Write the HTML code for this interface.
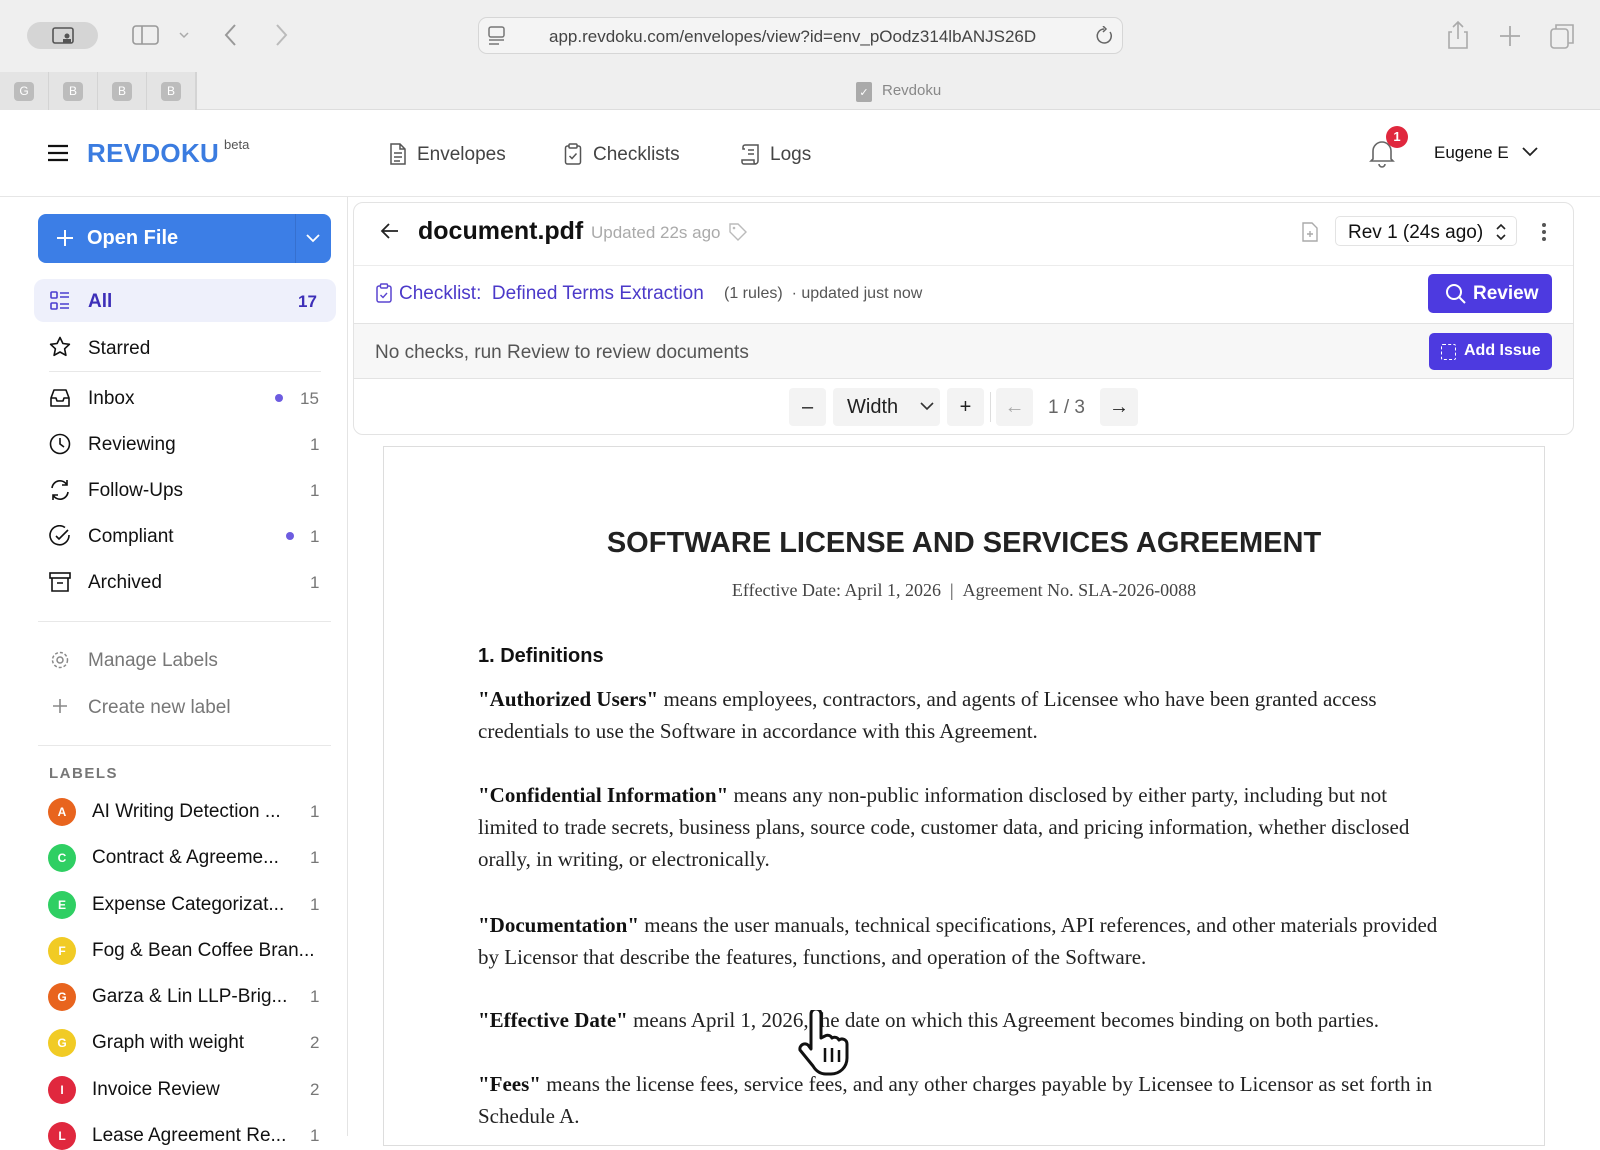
<!DOCTYPE html>
<html><head><meta charset="utf-8"><style>
*{box-sizing:border-box;margin:0;padding:0}
body{width:1600px;height:1136px;overflow:hidden;background:#fff;font-family:"Liberation Sans",sans-serif;position:relative;color:#111}
.abs{position:absolute}
svg{display:block}
.chrome{left:0;top:0;width:1600px;height:110px;background:#efefef;border-bottom:1px solid #ddd}
.url{left:478px;top:17px;width:645px;height:37px;border:1px solid #d6d6d6;border-radius:9px;background:#f4f4f4;font-size:17px;color:#444;padding:9px 0 0 70px}
.tab{top:72px;width:49px;height:38px;border-right:1px solid #d4d4d4;background:#e4e4e4}
.tab span{position:absolute;left:14px;top:10px;width:20px;height:19px;background:#bcbcbc;border-radius:4px;color:#fff;font-size:12px;text-align:center;line-height:19px}
.hdr{left:0;top:110px;width:1600px;height:87px;border-bottom:1px solid #e6e6e6;background:#fff}
.nav{font-size:19px;color:#444;top:144px}
.side{left:0;top:197px;width:348px;height:939px;border-right:1px solid #e4e4e4}
.item{left:50px;font-size:19px;color:#111;height:24px;width:270px;white-space:nowrap}
.item .t{position:absolute;left:38px;top:2px}
.cnt{font-size:17px;color:#777}
.dot{width:8px;height:8px;border-radius:50%;background:#6d5ce0}
.lab{left:48px;font-size:19px;color:#111}
.lab .b{position:absolute;left:0;top:-3px;width:28px;height:28px;border-radius:50%;color:#fff;font-size:12px;font-weight:bold;text-align:center;line-height:28px}
.lab .t{position:absolute;left:44px;top:0;white-space:nowrap}
.lab .c{position:absolute;left:262px;top:1px;color:#777;font-size:17px}
.hr{height:2px;background:#e8e8e8}
.card{left:353px;top:202px;width:1221px;height:233px;border:1px solid #e3e3e3;border-radius:10px;overflow:hidden;background:#fff}
.doc{left:383px;top:446px;width:1162px;height:700px;border:1px solid #ddd;background:#fff}
.p{font-family:"Liberation Serif",serif;font-size:21px;color:#222;left:478px;line-height:32px;white-space:nowrap}
.p b{color:#111}
.btn{background:#4d3ae0;color:#fff;border-radius:5px;font-size:19px;font-weight:bold}
.tb{background:#f3f3f3;border-radius:4px;height:38px;top:388px;font-size:20px;color:#222;text-align:center;line-height:38px}
</style></head><body>
<div class="abs chrome"></div>
<div class="abs" style="left:27px;top:22px;width:71px;height:27px;border-radius:14px;background:#d5d5d5"></div>
<svg class="abs" style="left:52px;top:27px" width="24" height="18"><rect x="1" y="1" width="20" height="15" rx="2" fill="none" stroke="#555" stroke-width="1.6"/><circle cx="15" cy="9" r="2.5" fill="#555"/><rect x="11" y="12" width="8" height="4" fill="#555"/></svg>
<svg class="abs" style="left:132px;top:24px" width="64" height="22"><rect x="1" y="2" width="25" height="18" rx="3" fill="none" stroke="#999" stroke-width="1.6"/><line x1="10" y1="2" x2="10" y2="20" stroke="#999" stroke-width="1.6"/><path d="M48 9l4 4 4-4" fill="none" stroke="#aaa" stroke-width="1.5"/></svg>
<svg class="abs" style="left:222px;top:23px" width="70" height="24"><path d="M13 2L4 12l9 10" fill="none" stroke="#999" stroke-width="2"/><path d="M55 2l9 10-9 10" fill="none" stroke="#bbb" stroke-width="2"/></svg>
<div class="abs url">app.revdoku.com/envelopes/view?id=env_pOodz314lbANJS26D</div>
<svg class="abs" style="left:488px;top:26px" width="18" height="20"><rect x="1" y="1" width="15" height="10" rx="2" fill="none" stroke="#777" stroke-width="1.5"/><line x1="1" y1="14" x2="16" y2="14" stroke="#777" stroke-width="1.5"/><line x1="1" y1="18" x2="11" y2="18" stroke="#777" stroke-width="1.5"/></svg>
<svg class="abs" style="left:1095px;top:26px" width="20" height="20"><path d="M15 6A7 7 0 1 1 9 3" fill="none" stroke="#666" stroke-width="1.5"/><path d="M8 0l3 3-3 3" fill="none" stroke="#666" stroke-width="1.5"/></svg>
<svg class="abs" style="left:1446px;top:20px" width="140" height="30"><path d="M6 12H3v16h18V12h-3M12 2v17M7 7l5-5 5 5" fill="none" stroke="#aaa" stroke-width="1.6"/><path d="M64 6v20M54 16h20" stroke="#aaa" stroke-width="1.8"/><rect x="105" y="9" width="17" height="19" rx="3" fill="none" stroke="#aaa" stroke-width="1.6"/><path d="M110 9V5h17v18h-5" fill="none" stroke="#aaa" stroke-width="1.6"/></svg>
<div class="abs tab" style="left:0"><span>G</span></div>
<div class="abs tab" style="left:49px"><span>B</span></div>
<div class="abs tab" style="left:98px"><span>B</span></div>
<div class="abs tab" style="left:147px"><span>B</span></div>
<div class="abs" style="left:196px;top:72px;width:1px;height:38px;background:#d4d4d4"></div>
<div class="abs" style="left:856px;top:82px;width:16px;height:20px;background:#aaa;border-radius:2px;color:#fff;font-size:11px;text-align:center;line-height:22px">✓</div>
<div class="abs" style="left:882px;top:82px;font-size:15px;color:#888">Revdoku</div>

<div class="abs hdr"></div>
<svg class="abs" style="left:47px;top:144px" width="22" height="18"><path d="M1 2h20M1 9h20M1 16h20" stroke="#111" stroke-width="2.2"/></svg>
<div class="abs" style="left:87px;top:138px;font-size:26px;font-weight:bold;color:#3b7ce0;letter-spacing:.3px">REVDOKU</div>
<div class="abs" style="left:224px;top:137px;font-size:13px;color:#555">beta</div>
<svg class="abs" style="left:389px;top:143px" width="18" height="22"><path d="M2 1h9l5 5v15H2z M11 1v5h5 M5 10h8M5 14h8M5 18h6" fill="none" stroke="#555" stroke-width="1.5"/></svg>
<div class="abs nav" style="left:417px">Envelopes</div>
<svg class="abs" style="left:564px;top:143px" width="18" height="22"><rect x="1.5" y="3" width="15" height="18" rx="2" fill="none" stroke="#555" stroke-width="1.5"/><rect x="5" y="1" width="8" height="4" rx="1" fill="#fff" stroke="#555" stroke-width="1.5"/><path d="M5.5 13l2.5 2.5 4.5-5" fill="none" stroke="#555" stroke-width="1.5"/></svg>
<div class="abs nav" style="left:593px">Checklists</div>
<svg class="abs" style="left:741px;top:143px" width="20" height="22"><path d="M4 2h13v16a3 3 0 0 1-3 3H3a2 2 0 0 1-2-2v-2h12v2a2 2 0 0 0 2 2 M4 2a2 2 0 0 0-2 2v2h2 M7 7h6M7 11h6" fill="none" stroke="#555" stroke-width="1.5"/></svg>
<div class="abs nav" style="left:770px">Logs</div>
<svg class="abs" style="left:1369px;top:138px" width="26" height="30"><path d="M4 21V13a9 9 0 0 1 18 0v8l2 2H2z M10 26a3 3 0 0 0 6 0" fill="none" stroke="#666" stroke-width="1.6"/></svg>
<div class="abs" style="left:1386px;top:126px;width:22px;height:22px;border-radius:50%;background:#e0283e;color:#fff;font-size:13px;font-weight:bold;text-align:center;line-height:22px">1</div>
<div class="abs" style="left:1434px;top:143px;font-size:17px;color:#111">Eugene E</div>
<svg class="abs" style="left:1521px;top:145px" width="18" height="14"><path d="M2 3l7 7 7-7" fill="none" stroke="#222" stroke-width="1.8"/></svg>

<div class="abs side"></div>
<div class="abs" style="left:38px;top:214px;width:293px;height:49px;background:#3c7ee6;border-radius:8px"></div>
<div class="abs" style="left:295px;top:214px;width:1px;height:49px;background:#3670cf"></div>
<svg class="abs" style="left:56px;top:229px" width="18" height="18"><path d="M9 1v16M1 9h16" stroke="#fff" stroke-width="2"/></svg>
<div class="abs" style="left:87px;top:227px;font-size:20px;color:#fff;font-weight:bold">Open File</div>
<svg class="abs" style="left:305px;top:232px" width="16" height="12"><path d="M2 3l6 6 6-6" fill="none" stroke="#fff" stroke-width="1.8"/></svg>
<div class="abs" style="left:34px;top:279px;width:302px;height:43px;background:#eef0fb;border-radius:10px"></div>
<svg class="abs" style="left:50px;top:291px" width="20" height="20"><rect x="1" y="1" width="6" height="6" rx="1" fill="none" stroke="#4a3fd0" stroke-width="1.6"/><rect x="1" y="12" width="6" height="6" rx="1" fill="none" stroke="#4a3fd0" stroke-width="1.6"/><path d="M10 2h9M10 6h9M10 13h9M10 17h9" stroke="#4a3fd0" stroke-width="1.6"/></svg>
<div class="abs" style="left:88px;top:291px;font-size:19px;font-weight:bold;color:#3d2fb8">All</div>
<div class="abs" style="left:298px;top:292px;font-size:17px;font-weight:bold;color:#3d2fb8">17</div>

<svg class="abs" style="left:49px;top:336px" width="22" height="22"><path d="M11 1.5l2.9 6 6.5.8-4.8 4.5 1.3 6.5L11 16l-5.9 3.3 1.3-6.5L1.6 8.3l6.5-.8z" fill="none" stroke="#111" stroke-width="1.6" stroke-linejoin="round"/></svg>
<div class="abs item" style="top:336px"><span class="t">Starred</span></div>
<div class="abs hr" style="left:49px;top:371px;width:272px;height:1px"></div>
<svg class="abs" style="left:49px;top:387px" width="22" height="22"><path d="M2 11l3-8h12l3 8v8H2z M2 11h5l1 3h6l1-3h5" fill="none" stroke="#111" stroke-width="1.6" stroke-linejoin="round"/></svg>
<div class="abs item" style="top:386px"><span class="t">Inbox</span></div>
<div class="abs dot" style="left:275px;top:394px"></div><div class="abs cnt" style="left:300px;top:389px">15</div>
<svg class="abs" style="left:49px;top:433px" width="22" height="22"><circle cx="11" cy="11" r="9.5" fill="none" stroke="#111" stroke-width="1.6"/><path d="M11 5v6l4 3" fill="none" stroke="#111" stroke-width="1.6"/></svg>
<div class="abs item" style="top:432px"><span class="t">Reviewing</span></div><div class="abs cnt" style="left:310px;top:435px">1</div>
<svg class="abs" style="left:49px;top:479px" width="22" height="22"><path d="M3 9a8 8 0 0 1 15-3M19 13a8 8 0 0 1-15 3 M18 1v5h-5 M4 21v-5h5" fill="none" stroke="#111" stroke-width="1.6"/></svg>
<div class="abs item" style="top:478px"><span class="t">Follow-Ups</span></div><div class="abs cnt" style="left:310px;top:481px">1</div>
<svg class="abs" style="left:49px;top:525px" width="22" height="22"><path d="M20 10a9.5 9.5 0 1 1-4-7.5 M7 11l3 3 9-9" fill="none" stroke="#111" stroke-width="1.6"/></svg>
<div class="abs item" style="top:524px"><span class="t">Compliant</span></div>
<div class="abs dot" style="left:286px;top:532px"></div><div class="abs cnt" style="left:310px;top:527px">1</div>
<svg class="abs" style="left:49px;top:571px" width="22" height="22"><rect x="1" y="2" width="20" height="5" fill="none" stroke="#111" stroke-width="1.6"/><path d="M3 7v13h16V7 M8 12h6" fill="none" stroke="#111" stroke-width="1.6"/></svg>
<div class="abs item" style="top:570px"><span class="t">Archived</span></div><div class="abs cnt" style="left:310px;top:573px">1</div>
<div class="abs hr" style="left:38px;top:621px;width:293px;height:1px"></div>
<svg class="abs" style="left:50px;top:650px" width="20" height="20"><circle cx="10" cy="10" r="3" fill="none" stroke="#888" stroke-width="1.5"/><circle cx="10" cy="10" r="7.5" fill="none" stroke="#888" stroke-width="1.5" stroke-dasharray="3 2"/></svg>
<div class="abs" style="left:88px;top:650px;font-size:19px;color:#777">Manage Labels</div>
<svg class="abs" style="left:52px;top:698px" width="16" height="16"><path d="M8 1v14M1 8h14" stroke="#888" stroke-width="1.6"/></svg>
<div class="abs" style="left:88px;top:697px;font-size:19px;color:#777">Create new label</div>
<div class="abs hr" style="left:38px;top:745px;width:293px;height:1px"></div>
<div class="abs" style="left:49px;top:765px;font-size:15px;font-weight:bold;color:#777;letter-spacing:1.5px">LABELS</div>
<div class="abs lab" style="top:801px"><span class="b" style="background:#e8641e">A</span><span class="t">AI Writing Detection ...</span><span class="c">1</span></div>
<div class="abs lab" style="top:847px"><span class="b" style="background:#2fcf63">C</span><span class="t">Contract &amp; Agreeme...</span><span class="c">1</span></div>
<div class="abs lab" style="top:894px"><span class="b" style="background:#2fcf63">E</span><span class="t">Expense Categorizat...</span><span class="c">1</span></div>
<div class="abs lab" style="top:940px"><span class="b" style="background:#f1cb25">F</span><span class="t">Fog &amp; Bean Coffee Bran...</span></div>
<div class="abs lab" style="top:986px"><span class="b" style="background:#e8641e">G</span><span class="t">Garza &amp; Lin LLP-Brig...</span><span class="c">1</span></div>
<div class="abs lab" style="top:1032px"><span class="b" style="background:#f1cb25">G</span><span class="t">Graph with weight</span><span class="c">2</span></div>
<div class="abs lab" style="top:1079px"><span class="b" style="background:#e0283e">I</span><span class="t">Invoice Review</span><span class="c">2</span></div>
<div class="abs lab" style="top:1125px"><span class="b" style="background:#e0283e">L</span><span class="t">Lease Agreement Re...</span><span class="c">1</span></div>

<div class="abs card">
 <div class="abs" style="left:0;top:62px;width:100%;height:1px;background:#ececec"></div>
 <div class="abs" style="left:0;top:120px;width:100%;height:56px;background:#f7f7f7;border-top:1px solid #e3e3e3;border-bottom:1px solid #e3e3e3"></div>
</div>
<svg class="abs" style="left:380px;top:222px" width="20" height="18"><path d="M18 9H3M9 2L2 9l7 7" fill="none" stroke="#222" stroke-width="1.8"/></svg>
<div class="abs" style="left:418px;top:217px;font-size:25px;font-weight:bold;color:#111">document.pdf</div>
<div class="abs" style="left:591px;top:223px;font-size:17px;color:#aaa">Updated 22s ago</div>
<svg class="abs" style="left:728px;top:222px" width="20" height="20"><path d="M2 2h8l8 8-8 8-8-8z" fill="none" stroke="#bbb" stroke-width="1.4"/><circle cx="6" cy="6" r="1.3" fill="#bbb"/></svg>
<svg class="abs" style="left:1302px;top:222px" width="16" height="20"><path d="M1 1h9l5 5v13H1z M8 9v6M5 12h6" fill="none" stroke="#aaa" stroke-width="1.4"/></svg>
<div class="abs" style="left:1335px;top:216px;width:182px;height:30px;border:1px solid #e3e3e3;border-radius:5px;font-size:19px;color:#111;padding:5px 0 0 12px">Rev 1 (24s ago)</div>
<svg class="abs" style="left:1494px;top:222px" width="14" height="20"><path d="M3 7l4-4 4 4M3 13l4 4 4-4" fill="none" stroke="#222" stroke-width="1.6"/></svg>
<svg class="abs" style="left:1541px;top:222px" width="6" height="20"><circle cx="3" cy="3" r="2" fill="#555"/><circle cx="3" cy="10" r="2" fill="#555"/><circle cx="3" cy="17" r="2" fill="#555"/></svg>
<svg class="abs" style="left:376px;top:283px" width="16" height="20"><rect x="1" y="3" width="14" height="16" rx="2" fill="none" stroke="#5a45d0" stroke-width="1.5"/><rect x="4.5" y="1" width="7" height="4" rx="1" fill="#fff" stroke="#5a45d0" stroke-width="1.4"/><path d="M4.5 12l2.5 2.5 4-4.5" fill="none" stroke="#5a45d0" stroke-width="1.4"/></svg>
<div class="abs" style="left:399px;top:283px;font-size:19px;color:#4b39c9">Checklist:&nbsp; Defined Terms Extraction</div>
<div class="abs" style="left:724px;top:285px;font-size:16px;color:#555">(1 rules) &nbsp;· updated just now</div>
<div class="abs btn" style="left:1428px;top:274px;width:124px;height:39px"></div>
<svg class="abs" style="left:1445px;top:283px" width="22" height="22"><circle cx="9" cy="9" r="7" fill="none" stroke="#fff" stroke-width="2"/><path d="M14 14l6 6" stroke="#fff" stroke-width="2"/></svg>
<div class="abs" style="left:1473px;top:283px;font-size:19px;font-weight:bold;color:#fff">Review</div>
<div class="abs" style="left:375px;top:342px;font-size:19px;color:#555">No checks, run Review to review documents</div>
<div class="abs btn" style="left:1429px;top:333px;width:123px;height:37px"></div>
<div class="abs" style="left:1441px;top:344px;width:15px;height:16px;border:1.5px dashed #fff;border-radius:2px"></div>
<div class="abs" style="left:1464px;top:342px;font-size:16px;font-weight:bold;color:#fff">Add Issue</div>
<div class="abs tb" style="left:789px;width:37px">–</div>
<div class="abs tb" style="left:833px;width:107px;text-align:left;padding-left:14px">Width</div>
<svg class="abs" style="left:920px;top:401px" width="14" height="10"><path d="M1 2l6 6 6-6" fill="none" stroke="#333" stroke-width="1.6"/></svg>
<div class="abs tb" style="left:947px;width:37px">+</div>
<div class="abs" style="left:990px;top:392px;width:1px;height:30px;background:#ddd"></div>
<div class="abs tb" style="left:996px;width:37px;color:#aaa">←</div>
<div class="abs" style="left:1048px;top:397px;font-size:19px;color:#666">1 / 3</div>
<div class="abs tb" style="left:1100px;width:38px">→</div>

<div class="abs doc"></div>
<div class="abs" style="left:383px;top:527px;width:1162px;text-align:center;font-size:29px;font-weight:bold;color:#222">SOFTWARE LICENSE AND SERVICES AGREEMENT</div>
<div class="abs" style="left:383px;top:580px;width:1162px;text-align:center;font-family:'Liberation Serif',serif;font-size:18px;color:#444">Effective Date: April 1, 2026 &nbsp;| &nbsp;Agreement No. SLA-2026-0088</div>
<div class="abs" style="left:478px;top:645px;font-size:20px;font-weight:bold;color:#111">1. Definitions</div>
<div class="abs p" style="top:683px"><b>"Authorized Users"</b> means employees, contractors, and agents of Licensee who have been granted access<br>credentials to use the Software in accordance with this Agreement.</div>
<div class="abs p" style="top:779px"><b>"Confidential Information"</b> means any non-public information disclosed by either party, including but not<br>limited to trade secrets, business plans, source code, customer data, and pricing information, whether disclosed<br>orally, in writing, or electronically.</div>
<div class="abs p" style="top:909px"><b>"Documentation"</b> means the user manuals, technical specifications, API references, and other materials provided<br>by Licensor that describe the features, functions, and operation of the Software.</div>
<div class="abs p" style="top:1004px"><b>"Effective Date"</b> means April 1, 2026, the date on which this Agreement becomes binding on both parties.</div>
<div class="abs p" style="top:1068px"><b>"Fees"</b> means the license fees, service fees, and any other charges payable by Licensee to Licensor as set forth in<br>Schedule A.</div>
<svg class="abs" style="left:797px;top:1010px" width="62" height="68"><path d="M14 4a5 5 0 0 1 10 0v24l4-2a5 5 0 0 1 7 2a5 5 0 0 1 7 2a5 5 0 0 1 8 4v14c0 9-7 16-16 16h-5c-6 0-10-3-13-8L3 40a5 5 0 0 1 8-5l3 4z" fill="#fff" stroke="#111" stroke-width="3" stroke-linejoin="round"/><path d="M28 38v14M35 38v14M42 40v12" stroke="#111" stroke-width="2.5"/></svg>
</body></html>
